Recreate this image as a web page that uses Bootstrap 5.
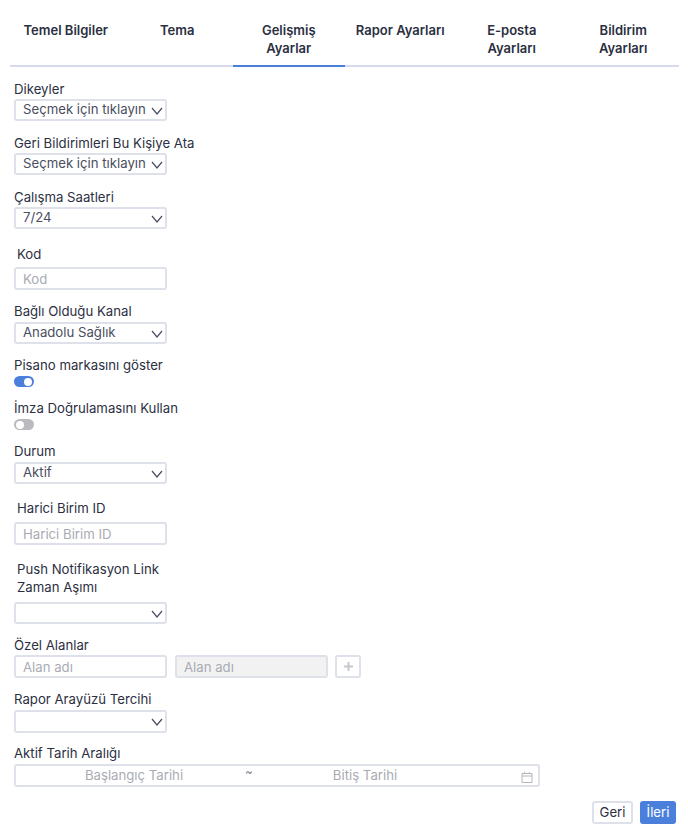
<!DOCTYPE html>
<html lang="tr">
<head>
  <meta charset="UTF-8">
  <title>Gelişmiş Ayarlar</title>
  <link href="https://cdn.jsdelivr.net/npm/bootstrap@5.3.2/dist/css/bootstrap.min.css" rel="stylesheet">
  <style>
    body {
      background: #fff;
      color: #2b2f3f;
      font-family: Inter, "Noto Sans", sans-serif;
      font-size: 13.2px;
      height: 837px;
      overflow: hidden;
    }
    .page-wrap {
      padding: 21px 9px 0 10px;
    }
    .tab-row {
      border-bottom: 2px solid #d5daec;
      height: 46px;
    }
    .tab-item {
      flex: 1 1 0;
      color: #2b2f3f;
      font-size: 13px;
      font-weight: 600;
      line-height: 18px;
      text-align: center;
      text-decoration: none;
      height: 46px;
    }
    .tab-item.active-tab {
      border-bottom: 2px solid #4a7fdc;
    }
    .form-area {
      padding: 13px 4px 0;
    }
    .field-label {
      display: block;
      line-height: 18px;
      height: 18px;
      margin-bottom: 1px;
    }
    .pad-label {
      padding-left: 3px;
      width: 153px;
    }
    .gap-4px {
      margin-bottom: 4px;
    }
    .gap-5px {
      margin-bottom: 5px;
    }
    .gap-2px {
      margin-bottom: 2px;
    }
    .field-label.two-line {
      height: 36px;
      margin-bottom: 6px;
    }
    .field-box {
      width: 153px;
      height: 22px;
      border: 2px solid #dfe1ea;
      border-radius: 3px;
      background: #fff;
      color: #4a4e60;
      line-height: 17px;
      padding: 0 1px 0 7px;
      white-space: nowrap;
    }
    .field-box svg {
      flex: none;
      margin-right: 1px;
      margin-top: 3px;
    }
    .field-box.tall-box {
      height: 23px;
    }
    .field-input {
      width: 153px;
      height: 23px;
      border: 2px solid #dfe1ea;
      border-radius: 3px;
      font-size: 13.2px;
      padding: 0 7px;
      color: #4a4e60;
      outline: none;
    }
    .field-input::placeholder {
      color: #a9abb3;
      opacity: 1;
    }
    .field-input:disabled {
      background: #f2f2f3;
    }
    .field-group {
      margin-bottom: 13px;
    }
    .mb-12px {
      margin-bottom: 12px;
    }
    .mb-11px {
      margin-bottom: 11px;
    }
    .mb-15px {
      margin-bottom: 15px;
    }
    .mb-14px {
      margin-bottom: 14px;
    }
    .mt-2px {
      margin-top: 15px;
    }
    .mt-3px {
      margin-top: 16px;
    }
    .switch-pill {
      display: block;
      width: 20px;
      height: 11px;
      border-radius: 6px;
      background: #b9bbc0;
      position: relative;
    }
    .switch-pill::after {
      content: "";
      position: absolute;
      top: 1.5px;
      left: 2px;
      width: 8px;
      height: 8px;
      border-radius: 50%;
      background: #fff;
    }
    .switch-pill.is-on {
      background: #4a7fdc;
    }
    .switch-pill.is-on::after {
      left: 10px;
    }
    .add-btn {
      width: 26px;
      height: 23px;
      margin-left: -1px;
      border: 2px solid #dfe1ea;
      border-radius: 3px;
      background: #fff;
      padding: 0;
    }
    .add-btn svg {
      display: block;
      margin: 0 auto;
    }
    .date-range {
      width: 526px;
      height: 23px;
      border: 2px solid #dfe1ea;
      border-radius: 3px;
      color: #a9abb3;
      line-height: 17px;
    }
    .date-start {
      width: 236px;
      text-align: center;
    }
    .date-end {
      width: 224px;
      text-align: center;
    }
    .date-tilde {
      width: 8px;
      margin-left: -7px;
      margin-top: -8px;
      color: #7b7e8c;
      font-size: 11px;
      line-height: 10px;
      text-align: center;
    }
    .date-icon {
      margin-left: auto;
      margin-right: 5px;
      margin-top: 2px;
    }
    .action-btn {
      height: 23px;
      border-radius: 3px;
      font-size: 13.2px;
      line-height: 19px;
      padding: 0;
    }
    .back-btn {
      width: 41px;
      border: 2px solid #dfe1ea;
      background: #fff;
      color: #2b2f3f;
    }
    .next-btn {
      width: 36px;
      margin-left: 7px;
      margin-right: 3px;
      border: 0;
      background: #4a7fdc;
      color: #fff;
    }
  </style>
</head>
<body>
  <div class="page-wrap">
    <div class="tab-row d-flex">
      <a class="tab-item" href="#">Temel Bilgiler</a>
      <a class="tab-item" href="#">Tema</a>
      <a class="tab-item active-tab" href="#">Gelişmiş<br>Ayarlar</a>
      <a class="tab-item" href="#">Rapor Ayarları</a>
      <a class="tab-item" href="#">E-posta<br>Ayarları</a>
      <a class="tab-item" href="#">Bildirim<br>Ayarları</a>
    </div>

    <div class="form-area">
      <div class="field-group">
        <span class="field-label">Dikeyler</span>
        <div class="field-box d-flex justify-content-between">Seçmek için tıklayın<svg width="12" height="14" viewBox="0 0 12 14" fill="none" stroke="#4a4e60" stroke-width="1.2"><path d="M1 4l5 6 5-6"/></svg></div>
      </div>
      <div class="field-group">
        <span class="field-label">Geri Bildirimleri Bu Kişiye Ata</span>
        <div class="field-box d-flex justify-content-between">Seçmek için tıklayın<svg width="12" height="14" viewBox="0 0 12 14" fill="none" stroke="#4a4e60" stroke-width="1.2"><path d="M1 4l5 6 5-6"/></svg></div>
      </div>
      <div class="field-group">
        <span class="field-label">Çalışma Saatleri</span>
        <div class="field-box d-flex justify-content-between">7/24<svg width="12" height="14" viewBox="0 0 12 14" fill="none" stroke="#4a4e60" stroke-width="1.2"><path d="M1 4l5 6 5-6"/></svg></div>
      </div>
      <div class="field-group mt-3px mb-12px">
        <span class="field-label pad-label gap-4px">Kod</span>
        <input class="field-input d-block" placeholder="Kod">
      </div>
      <div class="field-group mb-12px">
        <span class="field-label gap-2px">Bağlı Olduğu Kanal</span>
        <div class="field-box d-flex justify-content-between">Anadolu Sağlık<svg width="12" height="14" viewBox="0 0 12 14" fill="none" stroke="#4a4e60" stroke-width="1.2"><path d="M1 4l5 6 5-6"/></svg></div>
      </div>
      <div class="field-group mb-12px">
        <span class="field-label gap-2px">Pisano markasını göster</span>
        <span class="switch-pill is-on"></span>
      </div>
      <div class="field-group mb-12px">
        <span class="field-label gap-2px">İmza Doğrulamasını Kullan</span>
        <span class="switch-pill"></span>
      </div>
      <div class="field-group">
        <span class="field-label gap-2px">Durum</span>
        <div class="field-box d-flex justify-content-between">Aktif<svg width="12" height="14" viewBox="0 0 12 14" fill="none" stroke="#4a4e60" stroke-width="1.2"><path d="M1 4l5 6 5-6"/></svg></div>
      </div>
      <div class="field-group mt-2px mb-15px">
        <span class="field-label pad-label gap-5px">Harici Birim ID</span>
        <input class="field-input d-block" placeholder="Harici Birim ID">
      </div>
      <div class="field-group mb-12px">
        <span class="field-label pad-label two-line">Push Notifikasyon Link Zaman Aşımı</span>
        <div class="field-box d-flex justify-content-end"><svg width="12" height="14" viewBox="0 0 12 14" fill="none" stroke="#4a4e60" stroke-width="1.2"><path d="M1 4l5 6 5-6"/></svg></div>
      </div>
      <div class="field-group mb-12px">
        <span class="field-label">Özel Alanlar</span>
        <div class="d-flex gap-2">
          <input class="field-input" placeholder="Alan adı">
          <input class="field-input" placeholder="Alan adı" disabled>
          <button class="add-btn" type="button" aria-label="Ekle"><svg width="9" height="9" viewBox="0 0 9 9" fill="none" stroke="#c6c8ce" stroke-width="2"><path d="M4.500 0v9M0 4.500h9"/></svg></button>
        </div>
      </div>
      <div class="field-group mb-11px">
        <span class="field-label gap-2px">Rapor Arayüzü Tercihi</span>
        <div class="field-box tall-box d-flex justify-content-end"><svg width="12" height="14" viewBox="0 0 12 14" fill="none" stroke="#4a4e60" stroke-width="1.2"><path d="M1 4l5 6 5-6"/></svg></div>
      </div>
      <div class="field-group mb-14px">
        <span class="field-label gap-2px">Aktif Tarih Aralığı</span>
        <div class="date-range d-flex align-items-center">
          <span class="date-start">Başlangıç Tarihi</span>
          <span class="date-tilde">~</span>
          <span class="date-end">Bitiş Tarihi</span>
          <svg class="date-icon" width="12" height="12" viewBox="0 0 12 12" fill="none" stroke="#b4b6bd"><path d="M1 2.500h10v9H1zM1 5h10M3.500 1v2M8.500 1v2"/></svg>
        </div>
      </div>
    </div>

    <div class="d-flex justify-content-end">
      <button class="action-btn back-btn" type="button">Geri</button>
      <button class="action-btn next-btn" type="button">İleri</button>
    </div>
  </div>
  <script src="https://cdn.jsdelivr.net/npm/bootstrap@5.3.2/dist/js/bootstrap.bundle.min.js"></script>
</body>
</html>
